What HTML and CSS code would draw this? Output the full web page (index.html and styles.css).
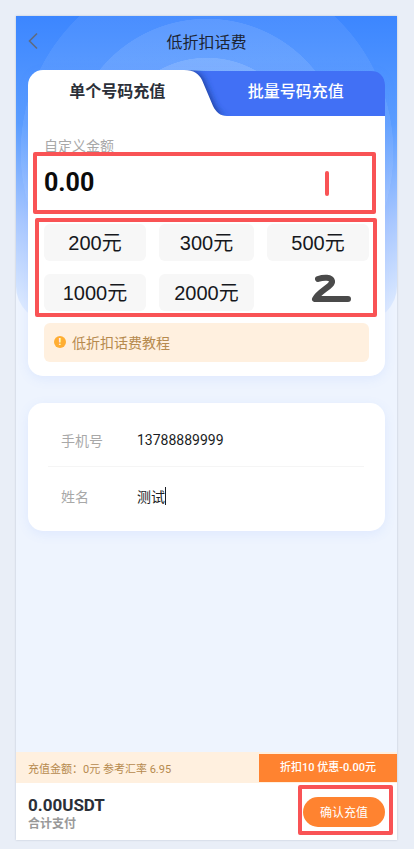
FILE: index.html
```html
<!DOCTYPE html>
<html lang="zh-CN">

<head>
    <meta charset="UTF-8">
    <meta name="viewport" content="width=device-width, initial-scale=1.0">
    <title>低折扣话费</title>
    <link rel="stylesheet" href="styles.css">
</head>

<body>
    <div class="page">
        <div class="hero"></div>

        <header class="topbar">
            <svg class="back" width="14" height="18" viewBox="0 0 14 18">
                <path d="M11 1.5 L3.5 9 L11 16.5" fill="none" stroke="#5f6b80" stroke-width="1.6" />
            </svg>
            <h1>低折扣话费</h1>
        </header>

        <section class="card recharge">
            <div class="tabs">
                <svg class="tabs-bg" width="357" height="46" viewBox="0 0 357 46">
                    <defs>
                        <filter id="soft" x="-50%" y="-20%" width="200%" height="140%">
                            <feGaussianBlur stdDeviation="3" />
                        </filter>
                    </defs>
                    <path d="M150 1 H343 Q357 1 357 15 V46 H150 Z" fill="#4170f5" />
                    <path d="M158 0 C168 0 173 4 176 10 L187 36 C190 42 194 46 201 46 H150 V0 Z" fill="#1f3f9e" filter="url(#soft)" />
                    <path d="M0 46 V0 H156 C166 0 171 4 174 10 L185 36 C188 42 192 46 199 46 Z" fill="#fff" />
                </svg>
                <div class="tab tab-active">单个号码充值</div>
                <div class="tab">批量号码充值</div>
            </div>

            <div class="recharge-body">
                <div class="amount-label">自定义金额</div>
                <div class="amount">0.00</div>
                <div class="chips">
                    <div class="chip">200元</div>
                    <div class="chip">300元</div>
                    <div class="chip">500元</div>
                    <div class="chip">1000元</div>
                    <div class="chip">2000元</div>
                </div>
                <div class="notice">
                    <span class="notice-icon">!</span>
                    <span>低折扣话费教程</span>
                </div>
            </div>
        </section>

        <section class="card form">
            <div class="form-row">
                <span class="form-label">手机号</span>
                <span class="form-value">13788889999</span>
            </div>
            <div class="form-row">
                <span class="form-label">姓名</span>
                <span class="form-value">测试<i class="caret"></i></span>
            </div>
        </section>

        <footer class="bottom">
            <div class="summary">
                <div class="summary-text">充值金额：0元 参考汇率 6.95</div>
                <div class="summary-off">折扣10 优惠-0.00元</div>
            </div>
            <div class="pay">
                <div class="pay-info">
                    <div class="pay-total">0.00USDT</div>
                    <div class="pay-label">合计支付</div>
                </div>
                <button class="pay-btn">确认充值</button>
            </div>
        </footer>

        <!-- red markup drawn over the screenshot -->
        <div class="mark mark-amount"></div>
        <div class="mark mark-chips"></div>
        <div class="mark mark-pay"></div>
        <div class="mark-one"></div>
        <svg class="mark-two" width="44" height="34" viewBox="0 0 44 34">
            <path d="M8 5 C14 3 21 3 22 7 C23 12 9 17 5 25 C16 25 28 25 38 25" fill="none" stroke="#4a4a4a" stroke-width="6" stroke-linecap="round" stroke-linejoin="round" />
        </svg>
    </div>
</body>

</html>
```

FILE: styles.css
```css
* {
    box-sizing: border-box;
}

body {
    margin: 0;
    padding: 16px 17px 9px 16px;
    background-color: #e9eef7;
    font-family: Roboto, "Noto Sans CJK SC", sans-serif;
}

.page {
    position: relative;
    display: flex;
    flex-direction: column;
    height: 824px;
    overflow: hidden;
    background-color: #eef4fe;
    box-shadow: 0 0 2px rgba(60, 70, 100, 0.25);
}

/* concentric circles behind the header */
.hero {
    position: absolute;
    top: 0;
    left: 0;
    right: 0;
    height: 306px;
    border-radius: 0 0 36px 36px;
    background:
        radial-gradient(circle 99px at 191px 141px, rgba(255, 255, 255, 0.14) 99px, transparent 99.5px),
        radial-gradient(circle 138px at 191px 141px, rgba(255, 255, 255, 0.1) 138px, transparent 138.5px),
        radial-gradient(circle 186px at 191px 136px, rgba(255, 255, 255, 0.07) 186px, transparent 186.5px),
        linear-gradient(180deg, #3c86ff 0%, #5b9dff 35%, #a9c8ff 67%, #e6f0ff 100%);
}

.topbar {
    position: relative;
    display: flex;
    align-items: center;
    justify-content: center;
    height: 54px;
    padding-bottom: 5px;
}

.topbar h1 {
    margin: 0;
    font-size: 16px;
    font-weight: 400;
    color: #1c2433;
}

.back {
    position: absolute;
    left: 10px;
    top: 16px;
}

.card {
    position: relative;
    margin: 0 12px;
    background-color: #fff;
    border-radius: 15px;
    overflow: hidden;
    box-shadow: 0 3px 12px rgba(90, 140, 255, 0.1);
}

.recharge {
    height: 306px;
    background-color: transparent;
}

.tabs {
    position: relative;
    display: flex;
    height: 46px;
}

.tabs-bg {
    position: absolute;
    top: 0;
    left: 0;
}

.tab {
    position: relative;
    flex: 1;
    text-align: center;
    line-height: 44px;
    font-size: 16px;
    font-weight: 500;
    color: #fff;
}

.tab-active {
    font-weight: 700;
    color: #2b2f38;
}

.recharge-body {
    height: 260px;
    padding: 20px 16px 0;
    background-color: #fff;
}

.amount-label {
    font-size: 14px;
    line-height: 20px;
    color: #a8a8a8;
}

.amount {
    height: 62px;
    padding-top: 10px;
    font-size: 25px;
    line-height: 34px;
    font-weight: 700;
    color: #0b0b0b;
}

.chips {
    display: grid;
    grid-template-columns: 102px 95px 102px;
    grid-auto-rows: 37px;
    gap: 13px;
    margin-top: 6px;
}

.chip {
    display: flex;
    align-items: center;
    justify-content: center;
    padding-bottom: 2px;
    background-color: #f7f7f7;
    border-radius: 6px;
    font-family: "Liberation Sans", "Noto Sans CJK SC", sans-serif;
    font-size: 20px;
    color: #16181d;
}

.notice {
    display: flex;
    align-items: center;
    gap: 6px;
    height: 39px;
    margin-top: 12px;
    padding: 0 0 1px 10px;
    background-color: #fff0df;
    border-radius: 6px;
    font-size: 14px;
    color: #b68a4e;
}

.notice-icon {
    width: 12px;
    height: 12px;
    border-radius: 50%;
    background-color: #ffae33;
    color: #fff;
    font-size: 9px;
    font-weight: 700;
    line-height: 12px;
    text-align: center;
}

.form {
    height: 128px;
    margin-top: 27px;
    padding: 0 21px 0 20px;
}

.form-row {
    display: flex;
    align-items: center;
    height: 64px;
    padding-left: 13px;
    font-size: 14px;
}

.form-row:first-child {
    padding-top: 10px;
    border-bottom: 1px solid #f5f5f5;
}

.form-row:last-child {
    padding-bottom: 6px;
}

.form-label {
    width: 76px;
    color: #a8a8a8;
}

.form-value {
    display: flex;
    align-items: center;
    color: #1a1d24;
}

.caret {
    width: 1px;
    height: 18px;
    background-color: #1a1d24;
}

.bottom {
    margin-top: auto;
}

.summary {
    display: flex;
    align-items: center;
    height: 31px;
    background-color: #fff0df;
}

.summary-text {
    flex: 1;
    padding-left: 12px;
    font-size: 11px;
    color: #b68a4e;
}

.summary-off {
    width: 138px;
    height: 28px;
    background-color: #ff8330;
    font-size: 11px;
    font-weight: 500;
    line-height: 28px;
    text-align: center;
    color: #fff;
}

.pay {
    display: flex;
    align-items: center;
    justify-content: space-between;
    height: 57px;
    padding: 0 12px;
    background-color: #fff;
}

.pay-info {
    padding-top: 4px;
}

.pay-total {
    font-size: 17px;
    line-height: 20px;
    font-weight: 700;
    color: #2b2f38;
}

.pay-label {
    font-size: 12px;
    line-height: 18px;
    font-weight: 700;
    color: #999;
}

.pay-btn {
    width: 82px;
    height: 30px;
    border: 0;
    padding: 0;
    border-radius: 15px;
    background-color: #ff8330;
    font-family: inherit;
    font-size: 12px;
    color: #fff;
}

.mark {
    position: absolute;
    border: 4px solid #f95355;
    border-radius: 2px;
}

.mark-amount {
    left: 17px;
    top: 136px;
    width: 343px;
    height: 62px;
}

.mark-chips {
    left: 19px;
    top: 202px;
    width: 342px;
    height: 99px;
}

.mark-pay {
    left: 282px;
    top: 769px;
    width: 95px;
    height: 50px;
}

.mark-one {
    position: absolute;
    left: 309px;
    top: 155px;
    width: 4px;
    height: 25px;
    border-radius: 2px;
    background-color: #f95355;
}

.mark-two {
    position: absolute;
    left: 294px;
    top: 258px;
}
```
